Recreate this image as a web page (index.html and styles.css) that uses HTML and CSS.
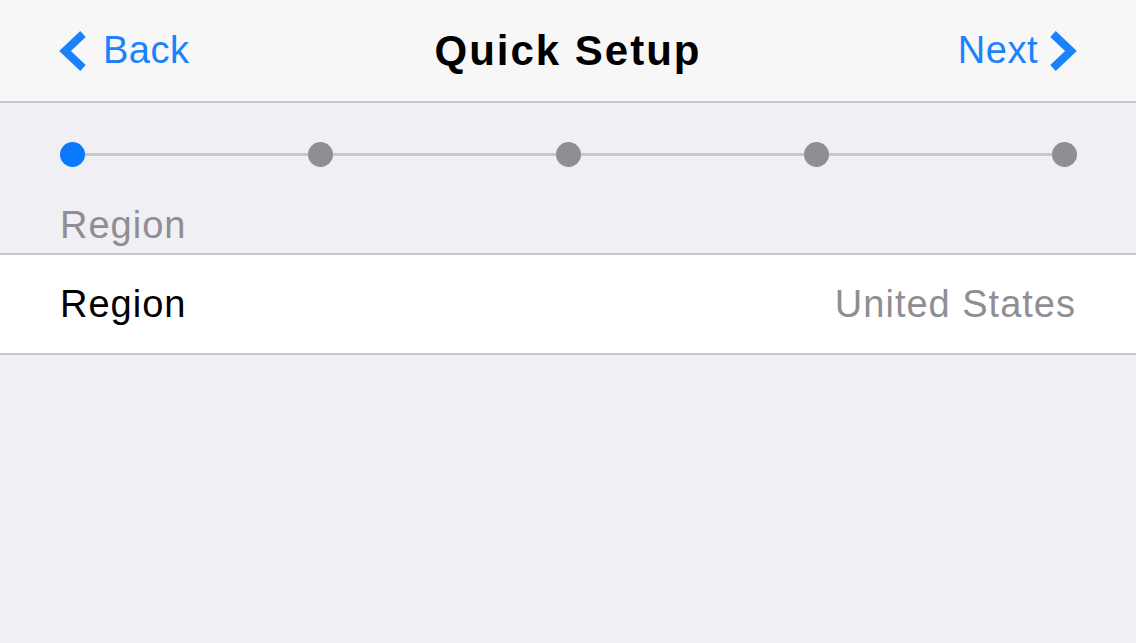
FILE: index.html
```html
<!DOCTYPE html>
<html lang="en">
<head>
    <meta charset="UTF-8">
    <meta name="viewport" content="width=device-width, initial-scale=1.0">
    <title>Quick Setup</title>
    <link rel="stylesheet" href="styles.css">
</head>
<body>
    <div class="nav">
        <div class="nav-btn back">
            <svg class="chev" width="30" height="42" viewBox="0 0 30 42">
                <polyline points="25,4 7,21 25,38" fill="none" stroke="#1a82fb" stroke-width="8" stroke-linejoin="miter"/>
            </svg>
            <span>Back</span>
        </div>
        <div class="nav-title">Quick Setup</div>
        <div class="nav-btn next">
            <span>Next</span>
            <svg class="chev" width="30" height="42" viewBox="0 0 30 42">
                <polyline points="5,4 23,21 5,38" fill="none" stroke="#1a82fb" stroke-width="8" stroke-linejoin="miter"/>
            </svg>
        </div>
    </div>

    <div class="steps">
        <div class="dot active"></div>
        <div class="line"></div>
        <div class="dot"></div>
        <div class="line"></div>
        <div class="dot"></div>
        <div class="line"></div>
        <div class="dot"></div>
        <div class="line"></div>
        <div class="dot"></div>
    </div>

    <div class="section-head">Region</div>
    <div class="group">
        <div class="row">
            <span class="label">Region</span>
            <span class="value">United States</span>
        </div>
    </div>
</body>
</html>
```

FILE: styles.css
```css
*{
    margin: 0;
    padding: 0;
    box-sizing: border-box;
}
body{
    width: 1136px;
    height: 643px;
    background: #efeff4;
    font-family: "Liberation Sans", Arial, sans-serif;
    overflow: hidden;
}
.nav{
    height: 103px;
    background: #f7f7f7;
    border-bottom: 2px solid #c8c7cc;
    display: flex;
    align-items: center;
    justify-content: space-between;
    padding: 0 58px 0 58px;
}
.nav-btn{
    display: flex;
    align-items: center;
    color: #1a82fb;
    font-size: 38px;
    letter-spacing: 0.5px;
    width: 180px;
}
.nav-btn.next{
    justify-content: flex-end;
}
.back span{
    margin-left: 15px;
}
.next span{
    margin-right: 10px;
}
.chev{
    display: block;
}
.nav-title{
    font-size: 42px;
    font-weight: 700;
    color: #000;
    letter-spacing: 2px;
}
.steps{
    display: flex;
    align-items: center;
    padding: 0 59px 0 60px;
    margin-top: 38px;
    height: 26px;
}
.dot{
    width: 25px;
    height: 25px;
    border-radius: 50%;
    background: #8e8e93;
    flex: none;
}
.dot.active{
    background: #0a7afd;
}
.line{
    flex: 1;
    height: 3px;
    background: #c8c7cc;
}
.section-head{
    color: #8e8e93;
    font-size: 38px;
    letter-spacing: 1px;
    padding: 0 60px;
    margin-top: 37px;
    height: 49px;
}
.group{
    background: #fff;
    border-top: 2px solid #c8c7cc;
    border-bottom: 2px solid #c8c7cc;
}
.row{
    height: 98px;
    display: flex;
    align-items: center;
    justify-content: space-between;
    padding: 0 60px;
    font-size: 38px;
    letter-spacing: 1px;
}
.label{
    color: #000;
}
.value{
    color: #8e8e93;
}
```
